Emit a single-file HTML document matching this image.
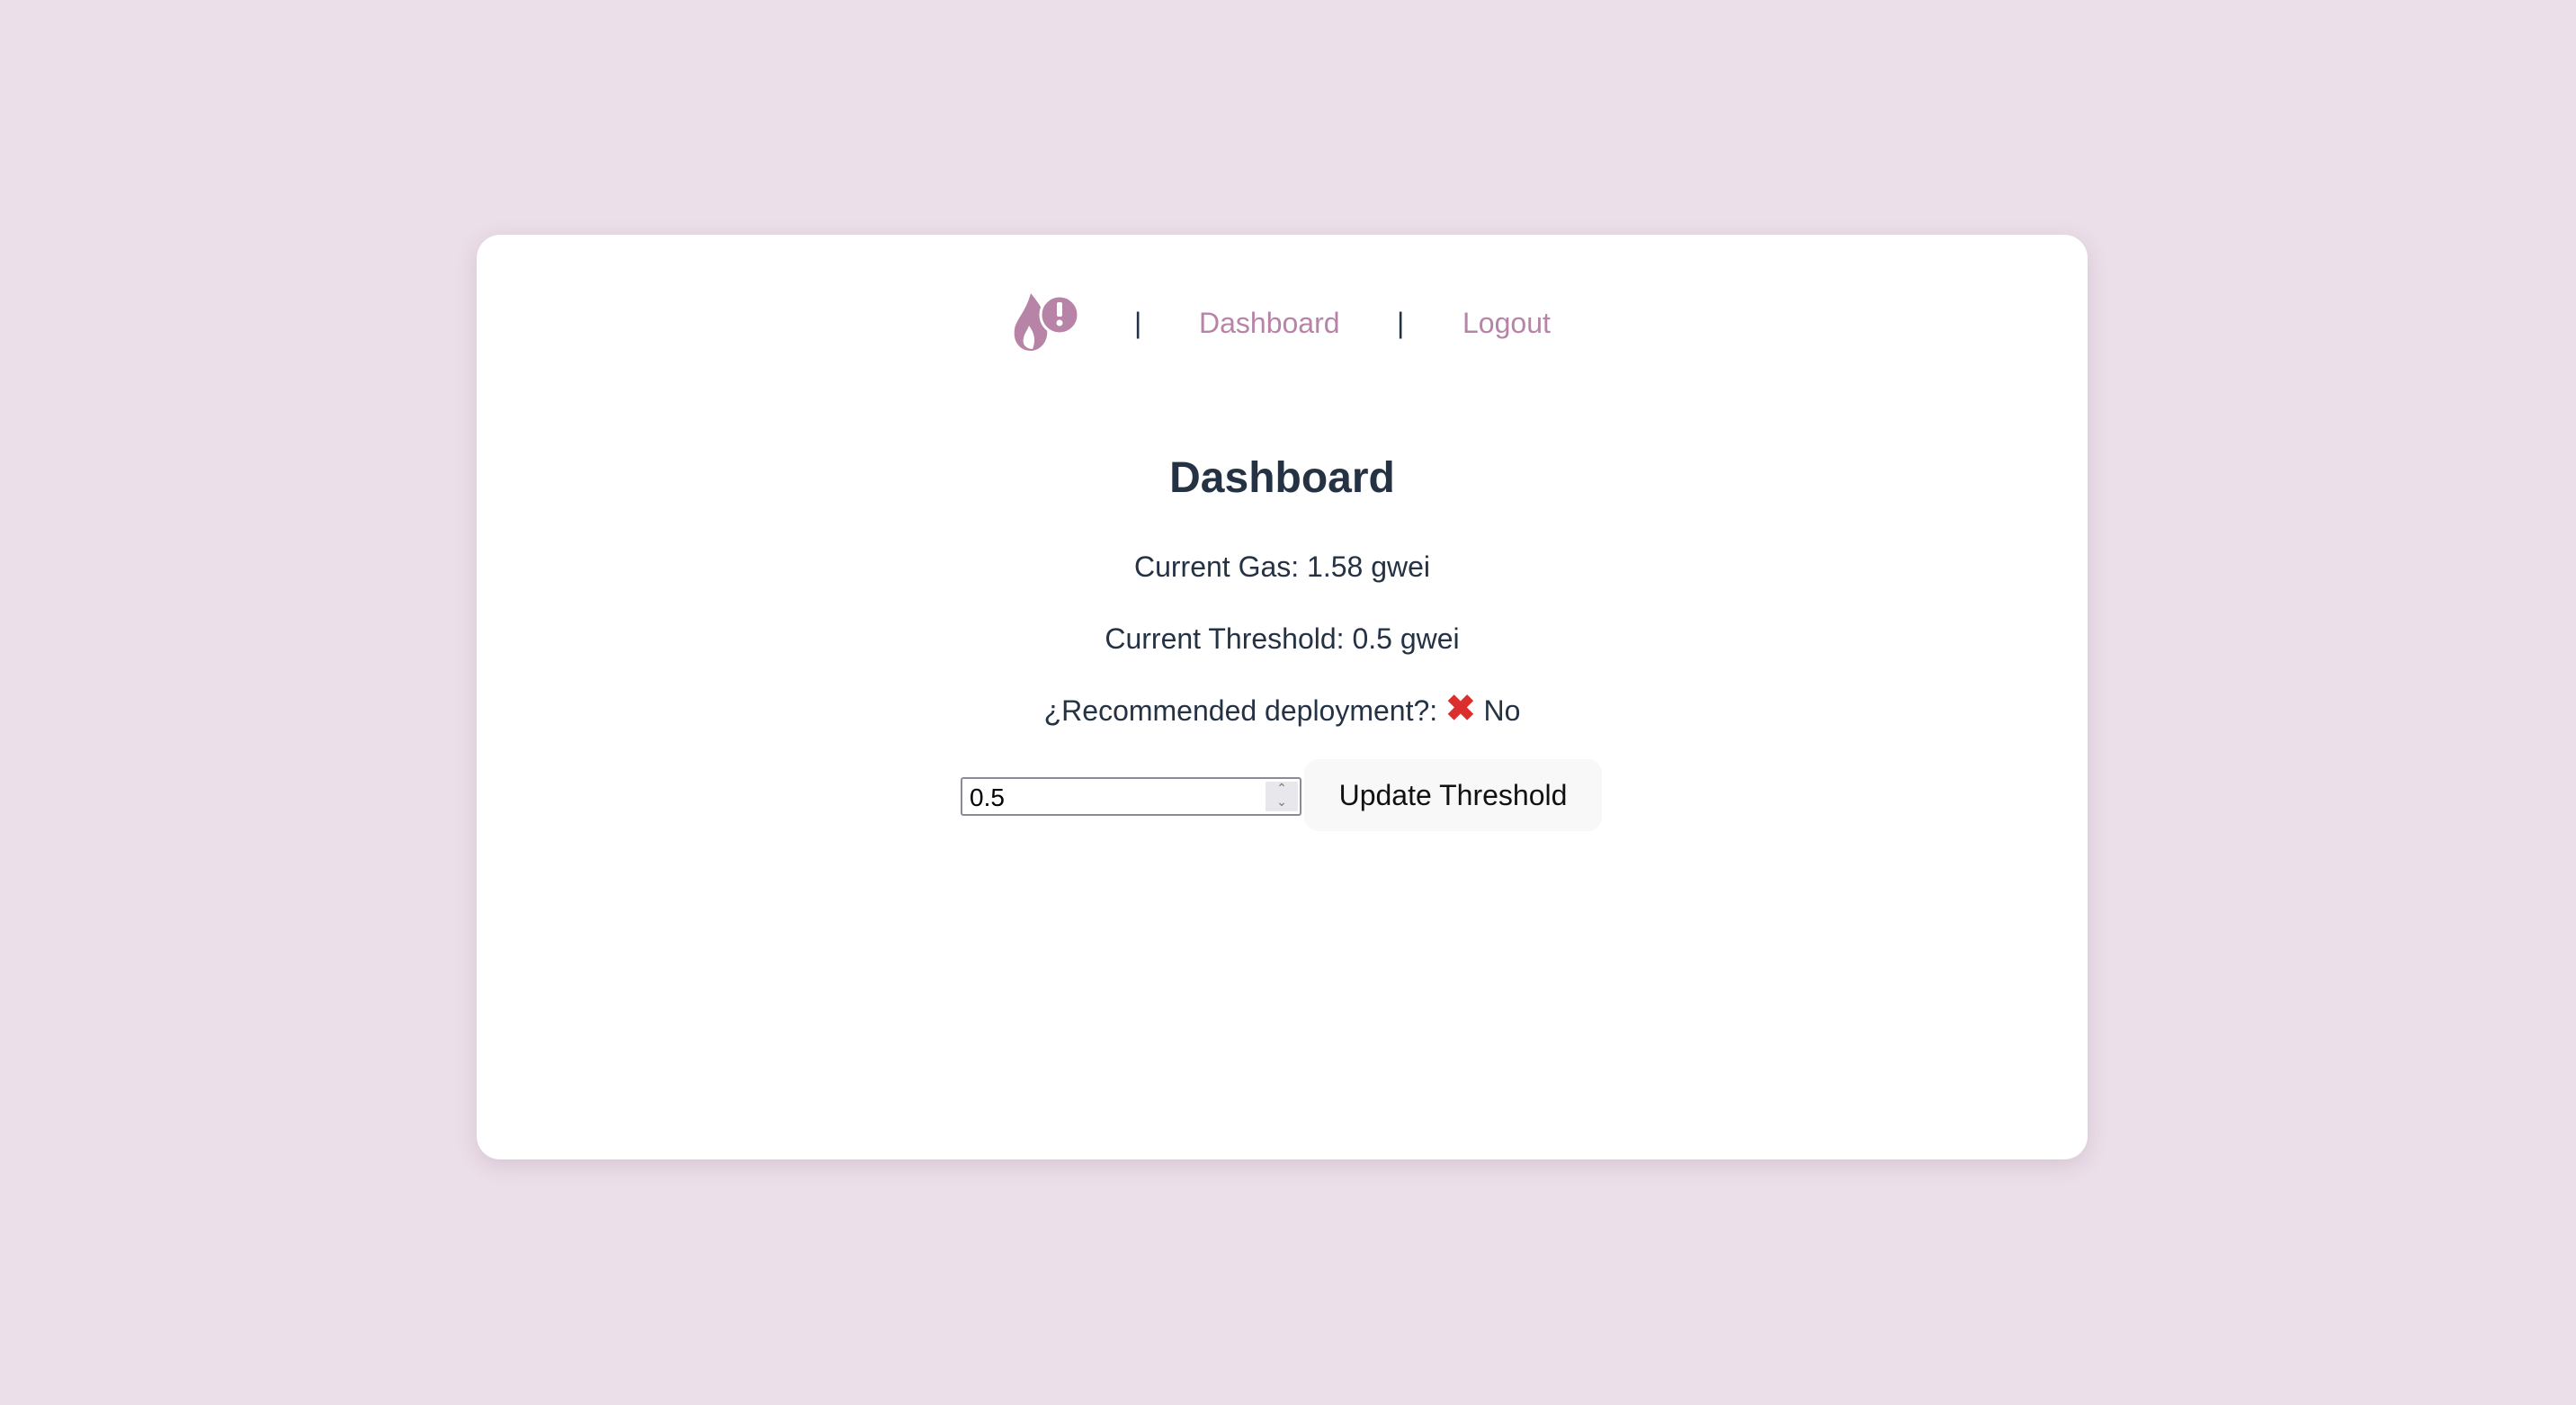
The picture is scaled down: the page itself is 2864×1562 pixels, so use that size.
<!DOCTYPE html>
<html><head><meta charset="utf-8"><style>
html,body{margin:0;padding:0;}
body{width:2864px;height:1562px;background:#ebdfe9;font-family:"Liberation Sans",Arial,sans-serif;position:relative;overflow:hidden;color:#253244;}
.card{position:absolute;left:530px;top:261px;width:1791px;height:1028px;background:#fff;border-radius:26px;box-shadow:0 6px 24px rgba(120,80,110,0.18);}
.abs{position:absolute;white-space:nowrap;}
.nav{font-size:32px;color:#b784a7;top:341px;}
.sep{font-size:32px;color:#253244;top:341px;}
.c{left:530px;width:1791px;text-align:center;}
.p{font-size:32px;}
</style></head><body>
<div class="card"></div>
<svg class="abs" style="left:1124px;top:322px" width="76" height="70" viewBox="0 0 76 70">
<path d="M22 4 C30 14 40 26 40 44 C42 58 32 68 22 68 C10 68 2 58 4 44 C6 32 16 26 22 4 Z" fill="#b784a7"/>
<path d="M20 40 C26 48 28 56 24 66 C18 66 12 62 14 54 C15 48 18 46 20 40 Z" fill="#fff"/>
<circle cx="54" cy="28" r="21" fill="#b784a7" stroke="#fff" stroke-width="3"/>
<rect x="51" y="14" width="6" height="16" rx="2" fill="#fff"/>
<circle cx="54" cy="37" r="3.5" fill="#fff"/>
</svg>
<div class="abs sep" style="left:1261px">|</div>
<div class="abs nav" style="left:1333px">Dashboard</div>
<div class="abs sep" style="left:1553px">|</div>
<div class="abs nav" style="left:1626px">Logout</div>
<div class="abs c" style="top:504px;font-size:48px;font-weight:bold;">Dashboard</div>
<div class="abs c p" style="top:612px">Current Gas: 1.58 gwei</div>
<div class="abs c p" style="top:692px">Current Threshold: 0.5 gwei</div>
<div class="abs c p" style="top:772px">¿Recommended deployment?: <span style="color:#dd2e2e;font-weight:bold;font-size:40px;line-height:32px">✖</span> No</div>
<div class="abs" style="left:1068px;top:864px;width:375px;height:39px;border:2px solid #8c8a96;border-radius:3px;background:#fff;">
<span class="abs" style="left:8px;top:5px;font-size:28px;color:#000">0.5</span>
<div class="abs" style="right:2px;top:3px;width:36px;height:33px;background:#e8e7ec;color:#777;font-size:14px;text-align:center;line-height:15px">&#8963;<br>&#8964;</div>
</div>
<div class="abs" style="left:1450px;top:844px;width:331px;height:80px;background:#f8f8f8;border-radius:16px;font-size:32px;color:#111;text-align:center;line-height:80px">Update Threshold</div>
</body></html>
